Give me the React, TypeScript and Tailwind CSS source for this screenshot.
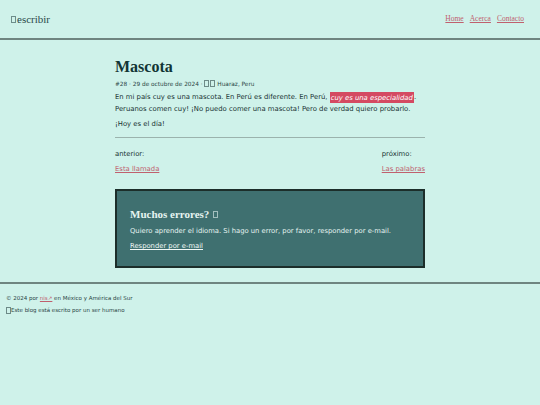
import React from "react";

const Tofu = ({ className = "" }: { className?: string }) => (
  <span
    className={`inline-block w-[5px] h-[7px] border border-current align-[-1px] opacity-60 ${className}`}
  />
);

const App = () => {
  const sans = "font-['DejaVu_Sans',Verdana,sans-serif]";
  const serif = "font-['Liberation_Serif','Times_New_Roman',serif]";

  return (
    <div className={`min-h-[405px] bg-[#cff2ea] text-[#183333] ${sans}`}>
      <header className="h-[40px] flex items-center justify-between px-[11px] border-b-2 border-[#6f8580]">
        <div className={`${serif} text-[11px] text-[#2b4a4a] flex items-center`}>
          <Tofu className="mr-[1px]" />
          escribir
        </div>
        <nav className={`${serif} text-[7.5px] flex gap-[6px] mr-[5px]`}>
          <a href="#" className="text-[#c0606e] underline">Home</a>
          <a href="#" className="text-[#c0606e] underline">Acerca</a>
          <a href="#" className="text-[#c0606e] underline">Contacto</a>
        </nav>
      </header>

      <main className="w-[310px] mx-auto pt-[18px] pb-[14px]">
        <h1 className={`${serif} font-bold text-[16px] leading-[18px] text-[#123535]`}>Mascota</h1>
        <p className="text-[5.8px] leading-[10px] mt-[3px] text-[#2a4545]">
          #28 · 29 de octubre de 2024 · <Tofu className="h-[6px] w-[4px]" /><Tofu className="ml-[1px] h-[6px] w-[4px]" /> Huaraz, Peru
        </p>
        <p className="text-[6.85px] leading-[12px] mt-[2px]">
          En mi país cuy es una mascota. En Perú es diferente. En Perú,{" "}
          <em className="bg-[#d44a62] text-white px-[1px] py-[1.5px]">cuy es una especialidad</em>.
          Peruanos comen cuy! ¡No puedo comer una mascota! Pero de verdad quiero probarlo.
        </p>
        <p className="text-[6.85px] leading-[12px] mt-[3px]">¡Hoy es el día!</p>
        <hr className="mt-[7px] border-t border-[#9bb3ad]" />

        <div className="flex justify-between text-[6.85px] leading-[12px] mt-[10px]">
          <div className="flex flex-col gap-[3px]">
            <span>anterior:</span>
            <a href="#" className="text-[#c0606e] underline">Esta llamada</a>
          </div>
          <div className="flex flex-col gap-[3px]">
            <span>próximo:</span>
            <a href="#" className="text-[#c0606e] underline">Las palabras</a>
          </div>
        </div>

        <section className="mt-[14px] bg-[#3f7070] border-2 border-[#1c2e2a] px-[13px] pt-[16px] pb-[15px] text-[#e6f4f1]">
          <h2 className={`${serif} font-bold text-[11px] leading-[14px] flex items-center gap-[4px]`}>
            Muchos errores? <Tofu />
          </h2>
          <p className="text-[6.8px] leading-[10px] mt-[5px]">
            Quiero aprender el idioma. Si hago un error, por favor, responder por e-mail.
          </p>
          <a href="#" className="text-[6.8px] leading-[10px] underline block mt-[5px] text-[#f0f8f6]">Responder por e-mail</a>
        </section>
      </main>

      <footer className="border-t-2 border-[#6f8580] px-[6px] pt-[10px] text-[5.5px] leading-[8px] text-[#2a4545]">
        <p>
          © 2024 por <a href="#" className="text-[#c0606e] underline">nis↗</a> en México y América del Sur
        </p>
        <p className="mt-[4px] flex items-center">
          <Tofu className="h-[6px] w-[4px]" />Este blog está escrito por un ser humano
        </p>
      </footer>
    </div>
  );
};

export default App;
